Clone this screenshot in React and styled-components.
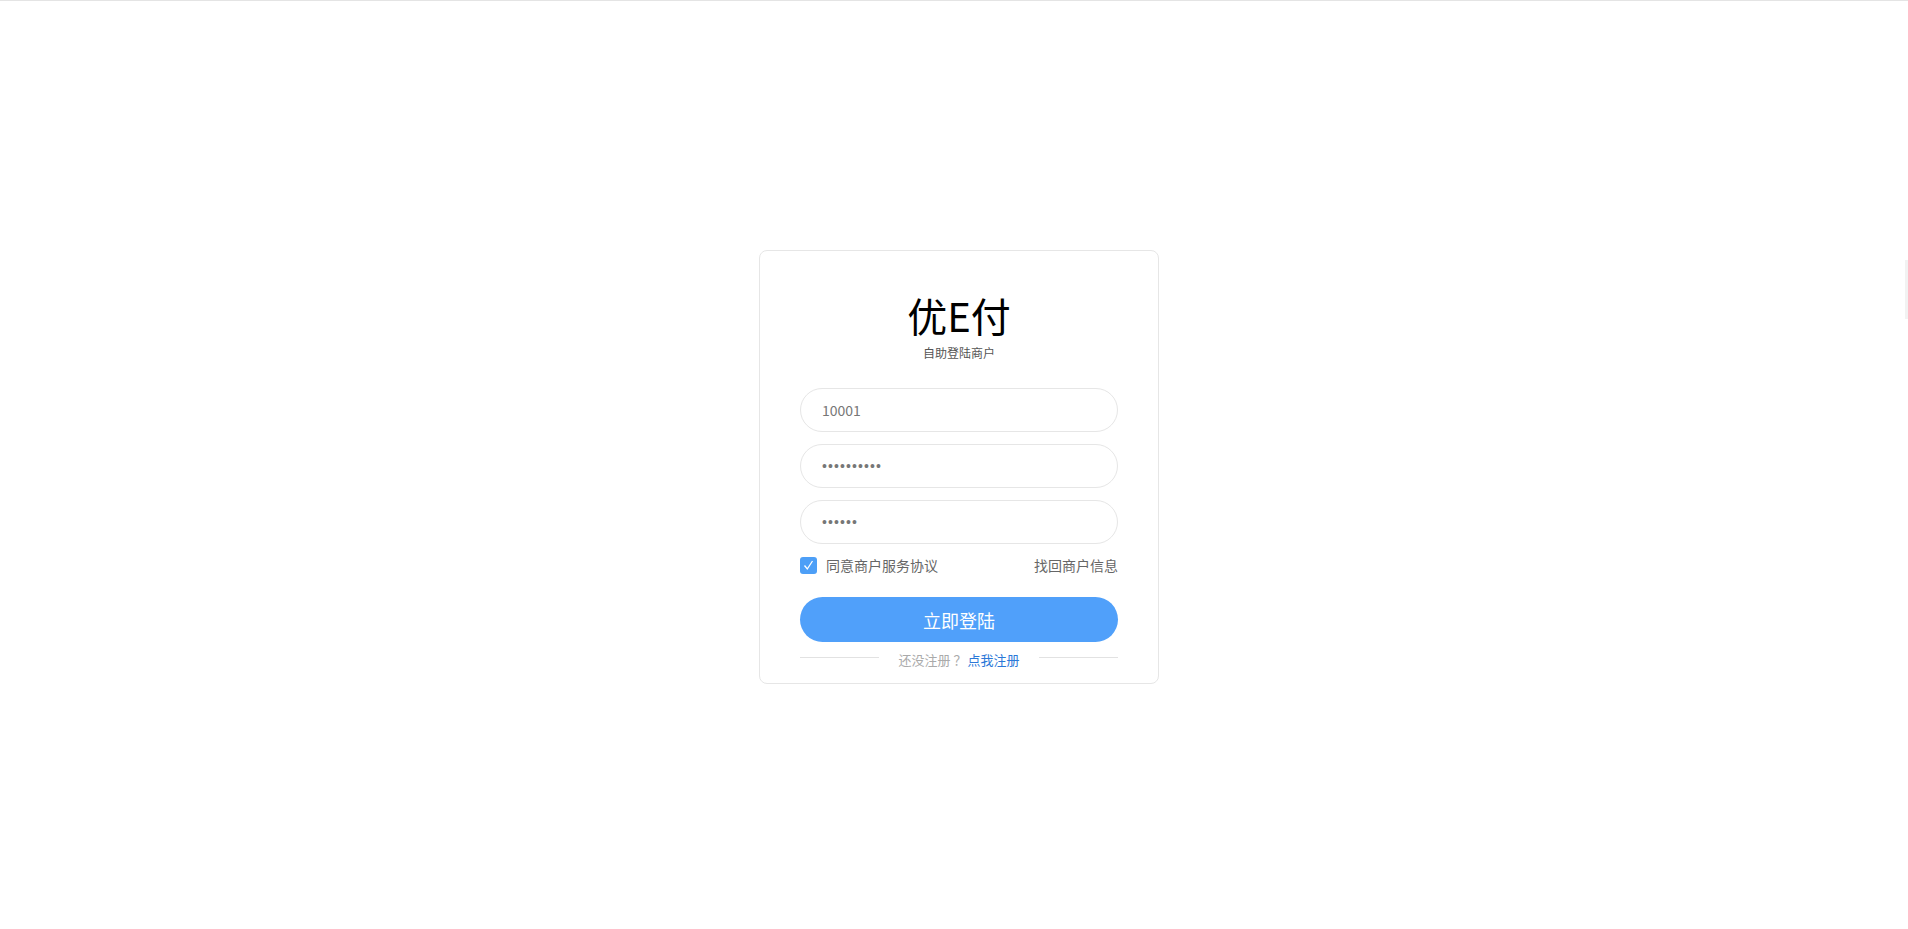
import React from "react";
import styled, { createGlobalStyle } from "styled-components";

const Global = createGlobalStyle`
  html, body { margin: 0; padding: 0; background: #fff; }
  body { font-family: "Noto Sans CJK SC", "Noto Sans", sans-serif; }
  * { box-sizing: border-box; }
`;

const Page = styled.div`
  position: relative;
  min-height: 929px;
  border-top: 1px solid #e4e4e4;
  display: flex;
  align-items: center;
  justify-content: center;
  padding: 4px 0 0 10px;
`;

const SideTab = styled.div`
  position: absolute;
  right: 0;
  top: 259px;
  width: 3px;
  height: 59px;
  background: #f2f2f2;
`;

const Card = styled.div`
  width: 400px;
  border: 1px solid #e6e6e6;
  border-radius: 8px;
  padding: 44px 40px 13px;
  display: flex;
  flex-direction: column;
  align-items: stretch;
`;

const Title = styled.h1`
  margin: 0;
  font-size: 40px;
  line-height: 40px;
  font-weight: 400;
  color: #000;
  text-align: center;
`;

const Subtitle = styled.div`
  margin-top: 10px;
  font-size: 12px;
  line-height: 16px;
  color: #555;
  text-align: center;
`;

const Fields = styled.div`
  margin-top: 27px;
  display: flex;
  flex-direction: column;
  gap: 12px;
`;

const Field = styled.input`
  width: 100%;
  height: 44px;
  border: 1px solid #e6e6e6;
  border-radius: 22px;
  padding: 0 21px;
  font-family: ${(p) =>
    p.type === "password"
      ? `"Liberation Sans", Arial, sans-serif`
      : `"Noto Sans CJK SC", "Noto Sans", sans-serif`};
  font-size: 14px;
  color: #777;
  outline: none;
  background: #fff;
  letter-spacing: ${(p) => (p.type === "password" ? "1.1px" : "0")};
`;

const OptionRow = styled.div`
  margin-top: 12px;
  height: 18px;
  display: flex;
  align-items: center;
  justify-content: space-between;
  font-size: 14px;
  color: #666;
`;

const Agree = styled.label`
  display: flex;
  align-items: center;
  gap: 9px;
`;

const Box = styled.span`
  width: 17px;
  height: 17px;
  border-radius: 3px;
  background: #4d9ff7;
  display: flex;
  align-items: center;
  justify-content: center;
`;

const TextLink = styled.span`
  color: #666;
`;

const Submit = styled.button`
  margin-top: 23px;
  height: 45px;
  border: none;
  border-radius: 23px;
  background: #50a0fa;
  color: #fff;
  font-family: "Noto Sans CJK SC", "Noto Sans", sans-serif;
  font-size: 18px;
`;

const Divider = styled.div`
  margin-top: 8px;
  height: 20px;
  display: flex;
  align-items: center;
  gap: 20px;
  font-size: 13px;
  line-height: 20px;
  &::before, &::after {
    content: "";
    flex: 1;
    height: 1px;
    background: #e2e2e2;
    align-self: flex-start;
    margin-top: 7px;
  }
`;

const Muted = styled.span`
  color: #aaa;
`;

const Register = styled.span`
  color: #2b78d8;
  margin-left: 1px;
`;

export default function App() {
  return (
    <>
      <Global />
      <Page>
        <Card>
          <Title>优E付</Title>
          <Subtitle>自助登陆商户</Subtitle>
          <Fields>
            <Field type="text" defaultValue="10001" />
            <Field type="password" defaultValue="1234567890" />
            <Field type="password" defaultValue="123456" />
          </Fields>
          <OptionRow>
            <Agree>
              <Box>
                <svg width="11" height="11" viewBox="0 0 11 11">
                  <polyline points="1.5,5.5 4.3,9 9.5,1" fill="none" stroke="#fff" strokeWidth="1.3" />
                </svg>
              </Box>
              同意商户服务协议
            </Agree>
            <TextLink>找回商户信息</TextLink>
          </OptionRow>
          <Submit>立即登陆</Submit>
          <Divider>
            <span>
              <Muted>还没注册 ？</Muted>
              <Register>点我注册</Register>
            </span>
          </Divider>
        </Card>
        <SideTab />
      </Page>
    </>
  );
}
